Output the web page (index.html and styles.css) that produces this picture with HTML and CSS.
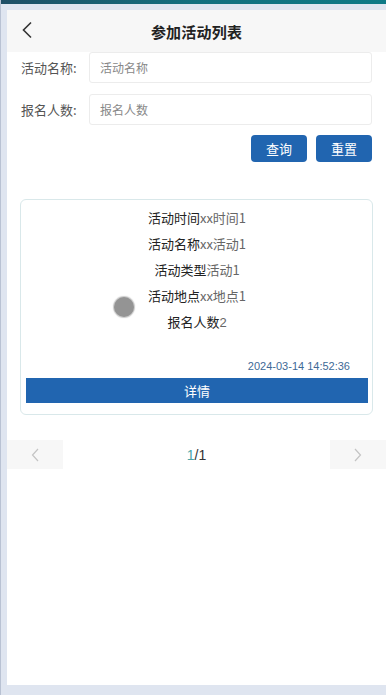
FILE: index.html
```html
<!DOCTYPE html>
<html lang="zh">
<head>
<meta charset="utf-8">
<link rel="stylesheet" href="styles.css">
</head>
<body>
<div class="frame">
  <div class="topbar"></div>
  <div class="screen">
    <header class="nav">
      <svg class="back" width="12" height="18" viewBox="0 0 12 18"><path d="M10 1.5 L2.5 9 L10 16.5" fill="none" stroke="#333" stroke-width="1.6"/></svg>
      <h1 class="title">参加活动列表</h1>
    </header>
    <form class="search">
      <div class="row">
        <label class="lbl">活动名称:</label>
        <div class="input">活动名称</div>
      </div>
      <div class="row">
        <label class="lbl">报名人数:</label>
        <div class="input">报名人数</div>
      </div>
      <div class="actions">
        <span class="btn">查询</span>
        <span class="btn">重置</span>
      </div>
    </form>
    <div class="card">
      <div class="avatar"></div>
      <div class="info">
        <p class="line"><span class="k">活动时间</span><span class="v">xx时间1</span></p>
        <p class="line"><span class="k">活动名称</span><span class="v">xx活动1</span></p>
        <p class="line"><span class="k">活动类型</span><span class="v">活动1</span></p>
        <p class="line"><span class="k">活动地点</span><span class="v">xx地点1</span></p>
        <p class="line"><span class="k">报名人数</span><span class="v num">2</span></p>
      </div>
      <div class="date">2024-03-14 14:52:36</div>
      <div class="detail">详情</div>
    </div>
    <div class="pager">
      <div class="pbtn"><svg width="8" height="14" viewBox="0 0 8 14"><path d="M7 1 L1.5 7 L7 13" fill="none" stroke="#c4c4c4" stroke-width="1.2"/></svg></div>
      <div class="pnum"><span class="cur">1</span>/1</div>
      <div class="pbtn"><svg width="8" height="14" viewBox="0 0 8 14"><path d="M1 1 L6.5 7 L1 13" fill="none" stroke="#c4c4c4" stroke-width="1.2"/></svg></div>
    </div>
  </div>
</div>
</body>
</html>
```
FILE: styles.css
```css
html, body {
  margin: 0;
  padding: 0;
}
body {
  width: 386px;
  height: 695px;
  overflow: hidden;
  background: #dfe5f0;
  font-family: "Noto Sans CJK SC", "Liberation Sans", sans-serif;
}
.frame {
  height: 695px;
  border-left: 1px solid #b9c2d3;
  box-sizing: border-box;
}
.topbar {
  height: 4px;
  background: linear-gradient(90deg, #1f4f66, #136f7e 50%, #0e7a86);
}
.screen {
  margin-top: 6px;
  margin-left: 6px;
  height: 675px;
  background: #fff;
  display: flex;
  flex-direction: column;
}
.nav {
  height: 42px;
  background: #f7f7f7;
  display: flex;
  align-items: center;
  justify-content: center;
  position: relative;
}
.back {
  position: absolute;
  left: 14px;
  top: 11px;
}
.title {
  margin: 0;
  font-size: 15px;
  font-weight: bold;
  color: #222;
  letter-spacing: 0.2px;
}
.search {
  margin: 0;
  padding: 0 14px 0 14px;
  display: flex;
  flex-direction: column;
  gap: 11px;
}
.row {
  display: flex;
  align-items: center;
}
.lbl {
  width: 68px;
  font-size: 13px;
  color: #555;
}
.input {
  flex: 1;
  height: 31px;
  box-sizing: border-box;
  border: 1px solid #ececec;
  border-radius: 3px;
  padding-left: 10px;
  display: flex;
  align-items: center;
  font-size: 12px;
  color: #888;
}
.actions {
  display: flex;
  justify-content: flex-end;
  gap: 9px;
  margin-top: -1px;
}
.btn {
  width: 56px;
  height: 27px;
  border-radius: 4px;
  background: #2165b0;
  color: #fff;
  font-size: 13px;
  display: flex;
  align-items: center;
  justify-content: center;
}
.card {
  position: relative;
  margin: 37px 13px 0 13px;
  height: 216px;
  box-sizing: border-box;
  border: 1px solid #d9e8ea;
  border-radius: 6px;
  display: flex;
  flex-direction: column;
  padding: 5px 4px 11px 5px;
}
.avatar {
  position: absolute;
  left: 93px;
  top: 97px;
  width: 20px;
  height: 20px;
  border-radius: 50%;
  background: #949494;
  box-shadow: 0 0 1px 1px rgba(148,148,148,0.5);
}
.info {
  display: flex;
  flex-direction: column;
  align-items: center;
}
.line {
  margin: 0;
  height: 26px;
  line-height: 26px;
  font-size: 13px;
  color: #222;
  white-space: nowrap;
}
.v {
  color: #666;
}
.num {
  font-family: "Liberation Sans", sans-serif;
  font-size: 13px;
}
.date {
  margin-top: auto;
  text-align: right;
  padding-right: 18px;
  font-family: "Liberation Sans", sans-serif;
  font-size: 11px;
  color: #3e6996;
  line-height: 14px;
  margin-bottom: 5px;
}
.detail {
  height: 25px;
  background: #2165b0;
  color: #fff;
  font-size: 13px;
  display: flex;
  align-items: center;
  justify-content: center;
}
.pager {
  margin-top: 25px;
  height: 29px;
  display: flex;
  align-items: center;
  justify-content: space-between;
}
.pbtn {
  width: 56px;
  height: 29px;
  background: #f7f7f7;
  display: flex;
  align-items: center;
  justify-content: center;
}
.pnum {
  font-family: "Liberation Sans", sans-serif;
  font-size: 14px;
  color: #333;
}
.cur {
  color: #4aa3a8;
}
```
